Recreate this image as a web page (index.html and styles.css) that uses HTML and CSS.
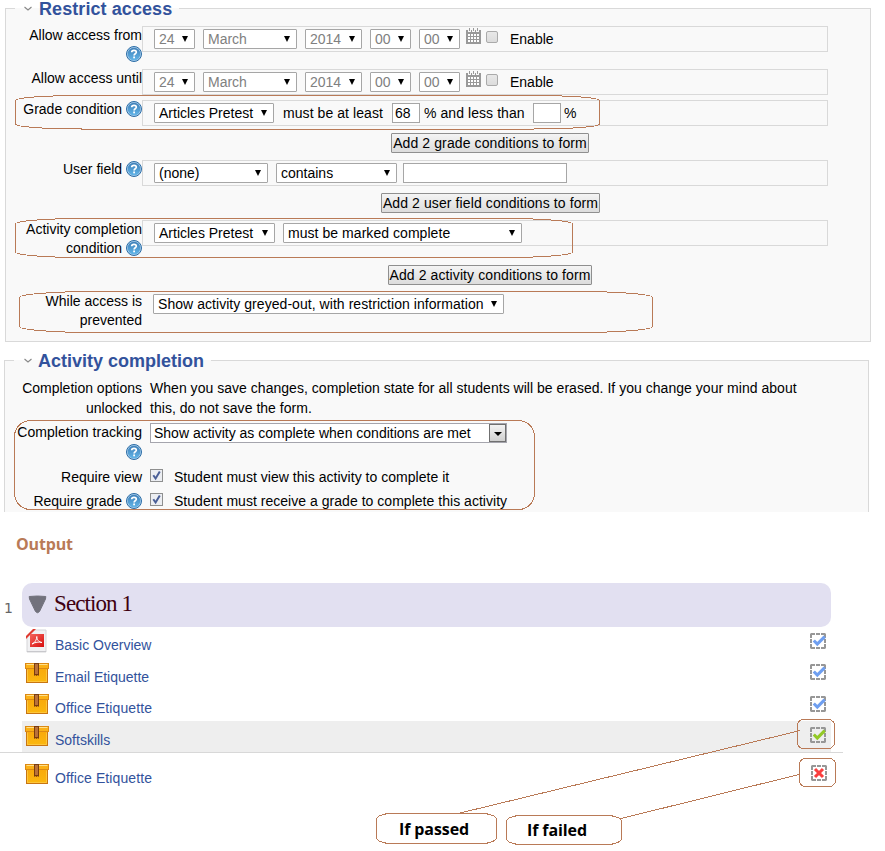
FILE: index.html
```html
<!DOCTYPE html>
<html lang="en">
<head>
<meta charset="utf-8">
<title>Restrict access</title>
<link rel="stylesheet" href="styles.css">
</head>
<body>
<svg class="defs" aria-hidden="true">
  <defs>
    <linearGradient id="blue" x1="0" y1="0" x2="0" y2="1"><stop offset="0" stop-color="#3f7fb8"/><stop offset="1" stop-color="#62b5e8"/></linearGradient>
    <linearGradient id="gold" x1="0" y1="0" x2="0" y2="1"><stop offset="0" stop-color="#f9a90c"/><stop offset="1" stop-color="#fbb80f"/></linearGradient>
    <linearGradient id="red" x1="0" y1="0" x2="1" y2="1"><stop offset="0" stop-color="#f4655c"/><stop offset="1" stop-color="#d80f0f"/></linearGradient>
    <symbol id="help" viewBox="0 0 16 16">
      <circle cx="8" cy="8" r="7.500" fill="#a9cdea" stroke="#2c6da6"/>
      <circle cx="8" cy="8" r="6.300" fill="url(#blue)"/>
      <path d="M5.700 6.300C5.700 3.600 10.400 3.700 10.300 6.200C10.200 7.800 8.100 7.700 8.100 9.500" fill="none" stroke="#fff" stroke-width="1.700"/>
      <rect x="7.200" y="10.500" width="1.800" height="1.800" fill="#fff"/>
    </symbol>
    <symbol id="cal" viewBox="0 0 15 16">
      <path d="M0 2H2V4H5V2H6V4H9V2H10V4H13V2H15V16H0Z" fill="#999"/>
      <path d="M3 0H4V3H3ZM7 0H8V3H7ZM11 0H12V3H11Z" fill="#999"/>
      <path d="M2 6H4V8H2ZM5 6H7V8H5ZM8 6H10V8H8ZM11 6H13V8H11ZM2 9H4V11H2ZM5 9H7V11H5ZM8 9H10V11H8ZM11 9H13V11H11ZM2 12H4V14H2ZM5 12H7V14H5ZM8 12H10V14H8ZM11 12H13V14H11Z" fill="#fff"/>
    </symbol>
    <symbol id="box" viewBox="0 0 24 20">
      <rect x="1.500" y="5.500" width="21" height="14" fill="url(#gold)" stroke="#c87512"/>
      <path d="M2.500 6.500V18.500H21.500V6.500" fill="none" stroke="#fdc63b"/>
      <rect x=".5" y=".5" width="23" height="5" fill="#fbb117" stroke="#dc8a14"/>
      <path d="M1.500 1.500H22.500" stroke="#ffe08a"/>
      <path d="M9 0H14V13L12.700 12L11.500 13L10.300 12L9 13Z" fill="#7a3c0e"/>
      <path d="M10 1H13V11H10Z" fill="#b9713a"/>
    </symbol>
    <symbol id="pdf" viewBox="0 0 21 24">
      <path d="M7 1H20V23H1V8Z" fill="#f1f1f3" stroke="#d5d5d8"/>
      <path d="M0 7L7 0H10L0 10Z" fill="#e03a30"/>
      <rect x="4" y="5" width="14" height="13" fill="url(#red)"/>
      <path d="M6 15C9 14 11 10 10.800 7.500C10.500 10 13 13.500 16 13.500C13 12.500 9 13.200 6 15Z" fill="none" stroke="#fff" stroke-width="1"/>
      <path d="M1 22.500H20" stroke="#c8c8cc"/>
    </symbol>
    <symbol id="dash" viewBox="0 0 16 16">
      <path d="M0 5V1L1 0H5V2H2V5ZM6 0H10V2H6ZM11 0H15L16 1V5H14V2H11ZM0 6H2V10H0ZM14 6H16V10H14ZM0 11H2V14H5V16H1L0 15ZM6 14H10V16H6ZM14 11H16V15L15 16H11V14H14Z" fill="#979797"/>
    </symbol>
    <symbol id="check" viewBox="0 0 16 16">
      <use href="#dash"/>
      <path d="M3.800 7.500L7.300 11L14.700 3.600" fill="none" stroke="currentColor" stroke-width="3.100"/>
    </symbol>
    <symbol id="cross" viewBox="0 0 16 16">
      <use href="#dash"/>
      <path d="M4 4L12 12M12 4L4 12" fill="none" stroke="#fb3f3f" stroke-width="3.100"/>
    </symbol>
    <symbol id="chev" viewBox="0 0 8 5"><path d="M.5 1L4 4L7.500 1" fill="none" stroke="#888" stroke-width="1.100"/></symbol>
  </defs>
</svg>

<main class="page">
  <fieldset class="panel restrict">
    <legend><svg class="chev"><use href="#chev"/></svg><span>Restrict access</span></legend>

    <div class="row r-from">
      <div class="label">Allow access from <svg class="help"><use href="#help"/></svg></div>
      <div class="group date">
        <span class="select off w41">24</span><span class="select off w94">March</span><span class="select off w57">2014</span><span class="select off w41">00</span><span class="select off w41">00</span>
        <svg class="cal"><use href="#cal"/></svg><span class="tick"></span><span class="enable">Enable</span>
      </div>
    </div>

    <div class="row r-until">
      <div class="label">Allow access until</div>
      <div class="group date">
        <span class="select off w41">24</span><span class="select off w94">March</span><span class="select off w57">2014</span><span class="select off w41">00</span><span class="select off w41">00</span>
        <svg class="cal"><use href="#cal"/></svg><span class="tick"></span><span class="enable">Enable</span>
      </div>
    </div>

    <div class="row r-field">
      <div class="label">Grade condition <svg class="help"><use href="#help"/></svg></div>
      <div class="group">
        <span class="select w120">Articles Pretest</span><span class="t-least">must be at least</span><span class="input w28">68</span><span class="t-less">% and less than</span><span class="input w28"></span><span class="t-pct">%</span>
      </div>
    </div>
    <div class="add"><span class="button b-grade">Add 2 grade conditions to form</span></div>

    <div class="row r-field">
      <div class="label">User field <svg class="help"><use href="#help"/></svg></div>
      <div class="group">
        <span class="select w114">(none)</span><span class="select w121">contains</span><span class="input w164"></span>
      </div>
    </div>
    <div class="add"><span class="button b-user">Add 2 user field conditions to form</span></div>

    <div class="row r-activity">
      <div class="label">Activity completion condition <svg class="help"><use href="#help"/></svg></div>
      <div class="group">
        <span class="select w121">Articles Pretest</span><span class="select w239">must be marked complete</span>
      </div>
    </div>
    <div class="add"><span class="button b-activity">Add 2 activity conditions to form</span></div>

    <div class="row r-while">
      <div class="label">While access is prevented</div>
      <span class="select w351">Show activity greyed-out, with restriction information</span>
    </div>
  </fieldset>

  <fieldset class="panel completion">
    <legend><svg class="chev"><use href="#chev"/></svg><span>Activity completion</span></legend>
    <div class="row r-unlocked">
      <div class="label">Completion options unlocked</div>
      <p class="note">When you save changes, completion state for all students will be erased. If you change your mind about this, do not save the form.</p>
    </div>
    <div class="row r-tracking">
      <div class="label">Completion tracking <svg class="help"><use href="#help"/></svg></div>
      <span class="combo">Show activity as complete when conditions are met<i></i></span>
    </div>
    <div class="row r-view">
      <div class="label">Require view</div>
      <svg class="checked" viewBox="0 0 13 13"><rect x=".5" y=".5" width="12" height="12" fill="#eceef2" stroke="#8e8f8f"/><path d="M3.300 6.200L5.600 9.500L9.800 2.500" fill="none" stroke="#4a5f97" stroke-width="2"/></svg>
      <span class="desc">Student must view this activity to complete it</span>
    </div>
    <div class="row r-grade">
      <div class="label">Require grade <svg class="help"><use href="#help"/></svg></div>
      <svg class="checked" viewBox="0 0 13 13"><rect x=".5" y=".5" width="12" height="12" fill="#eceef2" stroke="#8e8f8f"/><path d="M3.300 6.200L5.600 9.500L9.800 2.500" fill="none" stroke="#4a5f97" stroke-width="2"/></svg>
      <span class="desc">Student must receive a grade to complete this activity</span>
    </div>
  </fieldset>

  <h2 class="output">Output</h2>
  <section class="course">
    <div class="num">1</div>
    <div class="body">
      <h3 class="bar"><svg class="tri" viewBox="0 0 19 19"><path d="M1.200 1.500Q9.500 .5 17.800 1.500L17.500 4L11.500 16.500Q9.500 19 7.500 16.500L1.500 4Z" fill="#72727c" stroke="#72727c" stroke-linejoin="round"/></svg>Section 1</h3>
      <div class="item i1"><svg class="pdf"><use href="#pdf"/></svg><a>Basic Overview</a><svg class="state blue"><use href="#check"/></svg></div>
      <div class="item i2"><svg class="box"><use href="#box"/></svg><a>Email Etiquette</a><svg class="state blue"><use href="#check"/></svg></div>
      <div class="item i3"><svg class="box"><use href="#box"/></svg><a>Office Etiquette</a><svg class="state blue"><use href="#check"/></svg></div>
      <div class="item i4"><svg class="box"><use href="#box"/></svg><a>Softskills</a><svg class="state green"><use href="#check"/></svg></div>
    </div>
  </section>
  <hr class="rule">
  <div class="item i5"><svg class="box"><use href="#box"/></svg><a>Office Etiquette</a><svg class="state"><use href="#cross"/></svg></div>
  <div class="callouts"><span class="passed">If passed</span><span class="failed">If failed</span></div>

  <svg class="marks" viewBox="0 0 885 851">
    <rect x="15.500" y="95.500" width="584" height="33.500" rx="66" ry="5"/>
    <rect x="15.500" y="218.500" width="557" height="39" rx="68" ry="5.500"/>
    <rect x="19.500" y="291.500" width="633" height="41" rx="76" ry="6"/>
    <rect x="14.500" y="420.500" width="520" height="89" rx="16"/>
    <rect x="797.500" y="719.500" width="37" height="29" rx="6"/>
    <rect x="799.500" y="758.500" width="36" height="28" rx="6"/>
    <rect x="376.500" y="813.500" width="120" height="30" rx="15" ry="6"/>
    <rect x="506.500" y="815.500" width="115" height="29" rx="15" ry="6"/>
    <path d="M460 813L800.500 730.500M619 819L799 774.500"/>
  </svg>
</main>
</body>
</html>
```
FILE: styles.css
```css
body { margin: 0; background: #fff; color: #000; font: 14px/19px "Liberation Sans", Arial, sans-serif; }
.defs { position: absolute; width: 0; height: 0; }
.page { position: relative; width: 885px; height: 851px; overflow: hidden; display: flex; flex-direction: column; align-items: flex-start; }
svg { display: block; flex: none; }

.panel { box-sizing: border-box; margin: 0; border: 1px solid #d9d9d9; background: #f9f9f9; padding: 0; min-width: 0; }
.restrict { width: 866px; height: 345px; margin: -3px 0 0 5px; padding: 7px 0 0; }
.completion { width: 865px; height: 163px; margin: 7px 0 0 4px; padding: 7px 0 0; border-bottom: 0; }
legend { display: flex; align-items: center; height: 22px; margin-left: 9px; padding: 0 7px 0 9px; font-size: 18px; line-height: 20px; font-weight: bold; color: #32529c; }
legend span { padding-top: 2px; }
.restrict legend span { letter-spacing: .08px; }
.completion legend { padding-left: 10px; }
.completion legend span { margin-left: -1px; }
.chev { width: 8px; height: 5px; margin-right: 7px; }

.row { display: flex; align-items: flex-start; }
.restrict .row { padding-left: 14px; }
.completion .row { padding-left: 7px; }
.label { width: 122px; text-align: right; flex: none; }
.completion .label { width: 130px; line-height: 20px; }
.help { display: inline-block; width: 16px; height: 16px; vertical-align: -3px; }
.r-from { height: 43px; }
.r-until { height: 31px; }
.r-field { height: 33px; }
.r-activity { height: 45px; }
.r-while { height: 48px; }
.r-while .select { margin: 2px 0 0 11px; letter-spacing: .05px; }

.group { box-sizing: border-box; display: flex; align-items: flex-start; width: 686px; height: 26px; border: 1px solid #d9d9d9; padding: 2px 0 0 11px; line-height: 20px; white-space: nowrap; }
.select, .input { box-sizing: border-box; height: 20px; border: 1px solid #a6a6a6; background: #fff; line-height: 19px; padding-left: 4px; flex: none; white-space: nowrap; }
.select { position: relative; margin-right: 8px; border-radius: 1px; }
.select::after { content: ""; position: absolute; right: 6px; top: 6px; border: solid transparent; border-width: 6px 3.500px 0; border-top-color: #000; }
.input { padding-left: 2px; }
.off { color: #808080; }
.w28 { width: 28px; } .w41 { width: 41px; } .w57 { width: 57px; } .w94 { width: 94px; }
.w114 { width: 114px; } .w120 { width: 120px; } .w121 { width: 121px; } .w164 { width: 164px; }
.w239 { width: 239px; letter-spacing: .05px; } .w351 { width: 351px; }
.group .w121 + .input { margin-left: -2px; }
.cal { width: 15px; height: 16px; margin: -1px 5px 0 -2px; }
.tick { box-sizing: border-box; width: 12px; height: 12px; margin: 2px 12px 0 0; border: 1px solid #aaa; border-radius: 2px; background: linear-gradient(#e8e8e8, #dcdcdc); }
.t-least { width: 109px; padding-left: 1px; letter-spacing: .07px; }
.t-less { width: 109px; padding-left: 4px; letter-spacing: .07px; }
.t-pct { padding-left: 3px; }

.add { display: flex; height: 27px; }
.button { box-sizing: border-box; height: 20px; border: 1px solid #8f8f8f; border-radius: 1px; background: linear-gradient(#f4f4f4, #dcdcdc); line-height: 19px; text-align: center; white-space: nowrap; letter-spacing: .1px; }
.b-grade { width: 198px; margin-left: 385px; }
.b-user { width: 219px; margin-left: 375px; }
.b-activity { width: 204px; margin-left: 382px; }

.note { margin: 0 0 0 8px; width: 660px; line-height: 20px; letter-spacing: .03px; }
.r-unlocked { height: 44px; }
.r-tracking { height: 45px; }
.r-tracking .label { margin-left: -5px; width: 135px; letter-spacing: .05px; }
.r-view { height: 24px; }
.combo { box-sizing: border-box; position: relative; width: 357px; height: 20px; margin-left: 8px; padding-left: 3px; border: 1px solid #a5a5ad; background: #fff; line-height: 18px; }
.r-tracking .combo { margin-top: 1px; }
.combo i { box-sizing: border-box; position: absolute; right: 0; top: 0; width: 17px; height: 18px; border: 1px solid #707070; background: linear-gradient(#f3f3f3, #cfcfcf); }
.combo i::after { content: ""; position: absolute; left: 4px; top: 7px; border: solid transparent; border-width: 4px 4px 0; border-top-color: #000; }
.checked { width: 13px; height: 13px; margin: 2px 0 0 8px; }
.desc { margin-left: 11px; line-height: 20px; letter-spacing: .03px; }

.output { margin: 21px 0 0 16px; font: bold 16px/22px "Open Sans", sans-serif; color: #b97a57; letter-spacing: -.15px; }
.course { display: flex; margin-top: 28px; }
.num { width: 18px; padding: 15px 0 0 4px; box-sizing: content-box; font: 14px/20px "DejaVu Sans", sans-serif; color: #666; }
.body { width: 809px; }
.bar { display: flex; box-sizing: border-box; height: 44px; margin: 0; padding: 0 0 0 6px; border-radius: 10px; background: #e2e0f1; font: 23px/41px "Liberation Serif", serif; color: #400010; letter-spacing: -.9px; }
.tri { width: 19px; height: 19px; margin: 12px 7px 0 0; }
.item { box-sizing: border-box; display: flex; align-items: flex-start; width: 809px; height: 31px; padding: 0 5px 0 3px; color: #32529c; }
.item a { margin: 9px auto 0 6px; }
.i3 a, .i5 a { letter-spacing: .1px; }
.i1 { height: 32px; padding-left: 4px; }
.i4 { background: #eee; }
.i4 a { margin-top: 10px; }
.i5 { margin: 7px 0 0 22px; padding-right: 4px; }
.pdf { width: 21px; height: 24px; margin: 2px 2px 0 0; }
.box { width: 24px; height: 20px; margin-top: 4px; }
.i4 .box { margin-top: 5px; }
.state { width: 16px; height: 16px; margin-top: 5px; }
.i1 .state, .i3 .state, .i4 .state { margin-top: 6px; }
.blue { color: #6f9ff0; }
.green { color: #93c926; }
.rule { width: 843px; height: 1px; margin: 0; border: 0; background: #d8d8d8; }
.callouts { display: flex; margin-top: 27px; padding-left: 399px; font: bold 16px/22px "Open Sans", sans-serif; letter-spacing: -.1px; }
.passed { width: 128px; }
.failed { padding-top: 1px; }
.marks { position: absolute; left: 0; top: 0; width: 885px; height: 851px; fill: none; stroke: #b97a57; stroke-width: 1; shape-rendering: crispEdges; pointer-events: none; }
```
